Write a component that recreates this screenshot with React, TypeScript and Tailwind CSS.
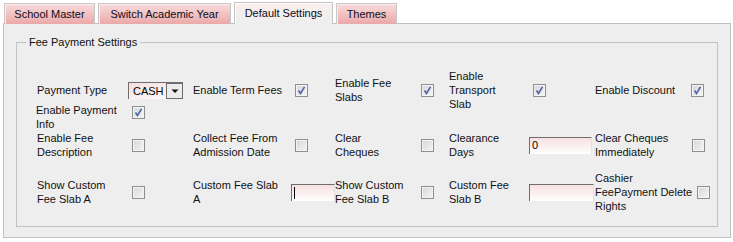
import React from "react";

const font = { fontFamily: '"Liberation Sans", Arial, sans-serif' };

function Check({ checked = false, className = "" }: { checked?: boolean; className?: string }) {
  return (
    <span
      className={`inline-flex w-[13px] h-[13px] border border-[#8e8f8f] bg-linear-to-br from-[#d6d6d6] to-[#f6f6f6] shadow-[inset_0_0_0_1px_#f4f4f4] ${className}`}
    >
      {checked && (
        <svg width="11" height="11" viewBox="0 0 11 11">
          <path d="M2.5 5.5 L4.5 8.5 L8.5 1.8" fill="none" stroke="#4a64a8" strokeWidth="1.6" />
        </svg>
      )}
    </span>
  );
}

function TextBox({ value = "", caret = false, className = "" }: { value?: string; caret?: boolean; className?: string }) {
  return (
    <div
      className={`h-[17px] border-t border-l border-[#6e6e6e] border-r border-r-[#e2e2e2] bg-linear-to-b from-[#f6e0e0] to-white text-[11px] leading-[15px] pl-[2px] flex items-center ${className}`}
    >
      {caret && <span className="w-px h-[12px] bg-black" />}
      {value}
    </div>
  );
}

function Label({ children, className = "" }: { children: React.ReactNode; className?: string }) {
  return <div className={`text-[11px] leading-[14px] text-[#111] ${className}`}>{children}</div>;
}

const tabs = ["School Master", "Switch Academic Year", "Default Settings", "Themes"];
const tabW = ["w-[91px]", "w-[133px]", "w-[99px]", "w-[61px]"];

const cols = "grid grid-cols-[90px_65px_98px_45px_85px_28px_80px_66px_96px_20px] items-center";

export default function App() {
  return (
    <div className="w-[733px] h-[242px] bg-white pt-[2px]" style={font}>
      <div className="flex items-end gap-[3px] pl-[4px] h-[22px] relative z-10 -mb-px">
        {tabs.map((t, i) =>
          i === 2 ? (
            <div
              key={t}
              className={`${tabW[i]} h-[22px] border border-b-0 border-[#c4c4c4] bg-linear-to-b from-[#fbeeee] to-[#eeeeee] shadow-[inset_1px_1px_0_#ffffff] flex items-center justify-center text-[11px] text-[#0c0c1c]`}
            >
              {t}
            </div>
          ) : (
            <div
              key={t}
              className={`${tabW[i]} h-[21px] border border-b-0 border-[#c8c8c8] bg-linear-to-b from-[#f7dcdc] to-[#eba8a8] shadow-[inset_1px_1px_0_#fbeaea] flex items-center justify-center text-[11px] text-[#0c0c1c]`}
            >
              {t}
            </div>
          )
        )}
      </div>
      <div className="mx-[3px] w-[728px] h-[215px] border border-[#c0c0c0] bg-[#eeeeee] px-[12px] pt-[11px]">
        <fieldset className="border border-[#c2c2c2] min-w-0">
          <legend className="ml-[9px] px-[3px] text-[11px] leading-[14px] text-[#111]">Fee Payment Settings</legend>
          <div className="pl-[20px] pt-[20px] pb-[13px] flex flex-col">
            <div className={`${cols} h-[42px]`}>
              <Label>Payment Type</Label>
              <div className="pl-px">
                <div className="w-[55px] h-[17px] flex border-t border-l border-[#6e6e6e] bg-linear-to-br from-[#f6dede] to-white">
                  <span className="flex-1 text-[11px] leading-[16px] pl-[4px]">CASH</span>
                  <span className="w-[17px] h-[16px] border border-[#6a6a6a] bg-[#ececec] flex items-center justify-center">
                    <svg width="8" height="6" viewBox="0 0 8 6">
                      <path d="M0.5 1.5 H7.5 L4 5 Z" fill="#111" />
                    </svg>
                  </span>
                </div>
              </div>
              <Label className="pl-px">Enable Term Fees</Label>
              <Check checked className="ml-[5px]" />
              <Label>
                Enable Fee
                <br />
                Slabs
              </Label>
              <Check checked className="ml-px" />
              <Label className="pl-px">
                Enable
                <br />
                Transport
                <br />
                Slab
              </Label>
              <Check checked className="ml-[5px]" />
              <Label className="pl-px">Enable Discount</Label>
              <Check checked className="ml-px" />
            </div>

            <div className={`${cols} h-[28px] -mt-[8px] items-start`}>
              <Label className="-ml-px">
                Enable Payment
                <br />
                Info
              </Label>
              <Check checked className="ml-[5px] mt-[3px]" />
            </div>

            <div className={`${cols} h-[28px]`}>
              <Label>
                Enable Fee
                <br />
                Description
              </Label>
              <Check className="ml-[5px]" />
              <Label className="pl-px">
                Collect Fee From
                <br />
                Admission Date
              </Label>
              <Check className="ml-[5px]" />
              <Label>
                Clear
                <br />
                Cheques
              </Label>
              <Check className="ml-px" />
              <Label className="pl-px">
                Clearance
                <br />
                Days
              </Label>
              <TextBox value="0" className="ml-px w-[63px]" />
              <Label className="pl-px">
                Clear Cheques
                <br />
                Immediately
              </Label>
              <Check className="ml-[2px]" />
            </div>

            <div className={`${cols} h-[42px] mt-[12px]`}>
              <Label>
                Show Custom
                <br />
                Fee Slab A
              </Label>
              <Check className="ml-[5px]" />
              <Label className="pl-px">
                Custom Fee Slab
                <br />A
              </Label>
              <TextBox caret className="ml-px w-[44px]" />
              <Label>
                Show Custom
                <br />
                Fee Slab B
              </Label>
              <Check className="ml-px" />
              <Label className="pl-px">
                Custom Fee
                <br />
                Slab B
              </Label>
              <TextBox className="ml-px w-[65px]" />
              <Label className="pl-px whitespace-nowrap">
                Cashier
                <br />
                FeePayment Delete
                <br />
                Rights
              </Label>
              <Check className="ml-[7px]" />
            </div>
          </div>
        </fieldset>
      </div>
    </div>
  );
}
